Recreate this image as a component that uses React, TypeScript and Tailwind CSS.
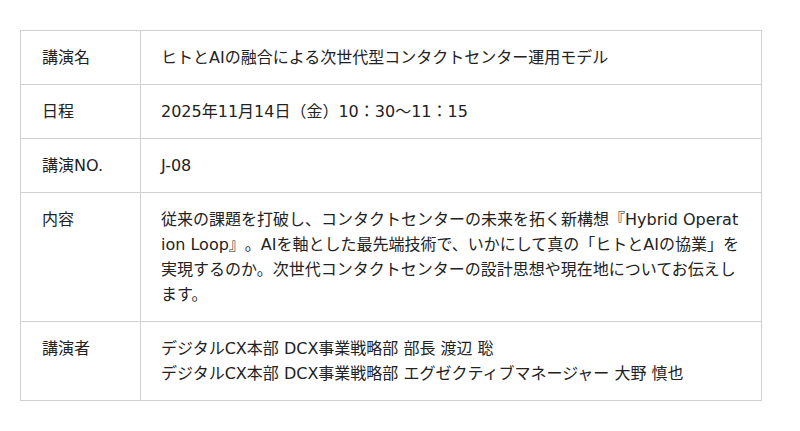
import React from "react";

const rows: { label: string; value: React.ReactNode }[] = [
  { label: "講演名", value: "ヒトとAIの融合による次世代型コンタクトセンター運用モデル" },
  { label: "日程", value: "2025年11月14日（金）10：30〜11：15" },
  { label: "講演NO.", value: "J-08" },
  {
    label: "内容",
    value:
      "従来の課題を打破し、コンタクトセンターの未来を拓く新構想『Hybrid Operation Loop』。AIを軸とした最先端技術で、いかにして真の「ヒトとAIの協業」を実現するのか。次世代コンタクトセンターの設計思想や現在地についてお伝えします。",
  },
  {
    label: "講演者",
    value: (
      <>
        デジタルCX本部 DCX事業戦略部 部長 渡辺 聡
        <br />
        デジタルCX本部 DCX事業戦略部 エグゼクティブマネージャー 大野 慎也
      </>
    ),
  },
];

export default function App() {
  return (
    <div
      className="w-[800px] h-[431px] bg-white pt-[30px] pl-[20px] text-[16px] leading-[25px] text-[#222] [text-spacing-trim:space-all]"
      style={{ fontFamily: '"DejaVu Sans", "Noto Sans CJK JP", sans-serif' }}
    >
      <div className="w-[742px] grid grid-cols-[120px_1fr] border-t border-l border-[#d0d0d0]">
        {rows.map((r) => (
          <React.Fragment key={r.label}>
            <div className="border-r border-b border-[#d0d0d0] pl-[21px] pr-2 py-[14px]">{r.label}</div>
            <div className="border-r border-b border-[#d0d0d0] pl-[20px] pr-[21px] py-[14px] break-all">
              {r.value}
            </div>
          </React.Fragment>
        ))}
      </div>
    </div>
  );
}
